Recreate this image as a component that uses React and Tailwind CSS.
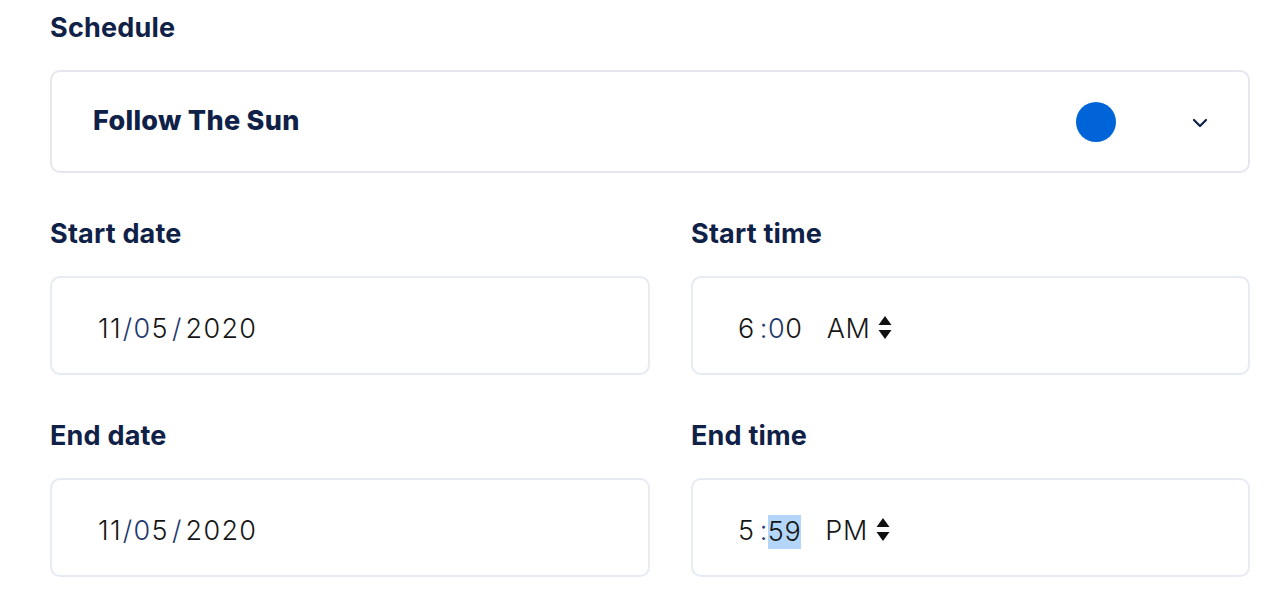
import React from "react";

const navy = "text-[#0f2147]";

function Label({ children }) {
  return (
    <div className={`text-[27px] leading-[32px] font-bold tracking-[0.2px] ${navy} mb-[26px]`}>{children}</div>
  );
}

function Box({ children, className = "" }) {
  return (
    <div
      className={`h-[99px] border-2 border-[#e6eaf3] rounded-[10px] bg-white flex items-center pt-[8px] text-[27px] font-light text-[#161616] ${className}`}
    >
      {children}
    </div>
  );
}

function DateValue() {
  return (
    <div className="flex items-center tracking-[1.3px]">
      <span>11</span>
      <span className="text-[#1e3a6e] ml-[1px]">/0</span>
      <span>5</span>
      <span className="text-[#1e3a6e] mx-[3px]">/</span>
      <span>2020</span>
    </div>
  );
}

function Spinner() {
  return (
    <svg width="14" height="26" viewBox="0 0 14 26" className="ml-[8px] -mt-[3px]">
      <path d="M7 1 L13.5 10 L0.5 10 Z" fill="#111" />
      <path d="M0.5 15 L13.5 15 L7 24 Z" fill="#111" />
    </svg>
  );
}

function TimeValue({ hour, minute, period, selected }) {
  return (
    <div className="flex items-center tracking-[0.6px]">
      <span>{hour}</span>
      <span className="text-[#1e3a6e] ml-[5px]">:</span>
      {selected ? (
        <span className="bg-[#b4d6fa] leading-[34px]">{minute}</span>
      ) : (
        <>
          <span className="text-[#1e3a6e]">{minute[0]}</span>
          <span>{minute[1]}</span>
        </>
      )}
      <span className="ml-[24px]">{period}</span>
      <Spinner />
    </div>
  );
}

export default function App() {
  return (
    <div
      className="min-h-screen bg-white pt-[12px] pl-[50px]"
      style={{ fontFamily: "Inter, 'Noto Sans', sans-serif" }}
    >
      <div className="w-[1200px]">
        <Label>Schedule</Label>
        <div className="h-[103px] border-2 border-[#e6e7ee] rounded-[10px] flex items-center pl-[41px] pr-[40px]">
          <div className={`text-[27px] font-extrabold tracking-[0.3px] ${navy} flex-1`}>Follow The Sun</div>
          <div className="w-[40px] h-[40px] rounded-full bg-[#0064d9] mr-[76px]" />
          <svg width="16" height="10" viewBox="0 0 16 10" className="mt-[2px]">
            <path d="M2 2 L8 8 L14 2" stroke="#0f2147" strokeWidth="2.2" fill="none" strokeLinecap="round" strokeLinejoin="round" />
          </svg>
        </div>

        <div className="grid grid-cols-[600px_559px] gap-x-[41px] mt-[45px]">
          <div>
            <Label>Start date</Label>
            <Box className="pl-[46px]"><DateValue /></Box>
          </div>
          <div>
            <Label>Start time</Label>
            <Box className="pl-[45px]"><TimeValue hour="6" minute="00" period="AM" /></Box>
          </div>
          <div className="mt-[45px]">
            <Label>End date</Label>
            <Box className="pl-[46px]"><DateValue /></Box>
          </div>
          <div className="mt-[45px]">
            <Label>End time</Label>
            <Box className="pl-[45px]"><TimeValue hour="5" minute="59" period="PM" selected /></Box>
          </div>
        </div>
      </div>
    </div>
  );
}
